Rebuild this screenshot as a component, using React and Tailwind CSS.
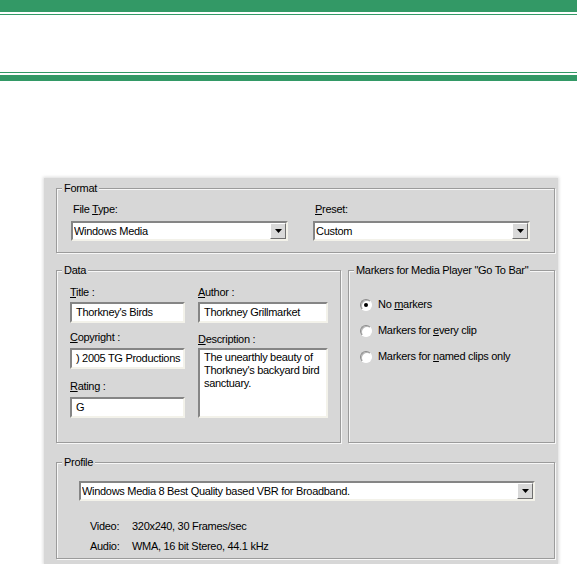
import React from 'react';

const GREEN = 'bg-[#339966]';

const Key = ({ children }) => <span className="underline underline-offset-[1px]">{children}</span>;

const Arrow = () => (
  <div className="flex h-[16px] w-[16px] items-center justify-center border border-t-white border-l-white border-b-[#6f6f6f] border-r-[#6f6f6f] bg-[#d9d9d9]">
    <svg width="7" height="4" viewBox="0 0 7 4">
      <path d="M0 0h7L3.5 4z" fill="#000" />
    </svg>
  </div>
);

const Combo = ({ value, className = '' }) => (
  <div
    className={`flex h-[20px] items-center border-2 border-t-[#858585] border-l-[#858585] border-b-[#f3f2ea] border-r-[#f3f2ea] bg-white pl-[1px] ${className}`}
  >
    <span className="flex-1 truncate">{value}</span>
    <Arrow />
  </div>
);

const Field = ({ value, className = '' }) => (
  <div
    className={`h-[21px] border-2 border-t-[#858585] border-l-[#858585] border-b-[#f3f2ea] border-r-[#f3f2ea] bg-white pl-[4px] leading-[17px] whitespace-nowrap overflow-hidden ${className}`}
  >
    {value}
  </div>
);

const Group = ({ title, className = '', children }) => (
  <fieldset className={`border border-[#9b9b9b] shadow-[1px_1px_0_#f7f7f7,inset_1px_1px_0_#f7f7f7] ${className}`}>
    <legend className="ml-[5px] bg-[#d7d7d7] px-[2px] leading-[13px]">{title}</legend>
    {children}
  </fieldset>
);

const Radio = ({ checked, children }) => (
  <div className="flex h-[13px] items-center">
    <div className="flex h-[12px] w-[12px] items-center justify-center rounded-full border border-t-[#8a8a8a] border-l-[#8a8a8a] border-b-white border-r-white bg-white shadow-[inset_1px_1px_0_#b5b5b5]">
      {checked && <div className="h-[4px] w-[4px] rounded-full bg-black" />}
    </div>
    <span className="ml-[6px] leading-[13px]">{children}</span>
  </div>
);

export default function App() {
  return (
    <div className="h-[564px] w-[577px] overflow-hidden bg-white font-['Liberation_Sans',Arial,sans-serif] text-[11px] tracking-[-0.3px] text-black">
      {/* header rules */}
      <div className={`h-[12px] ${GREEN}`} />
      <div className="h-[2px]" />
      <div className={`h-[1px] ${GREEN}`} />
      <div className="h-[57px]" />
      <div className={`h-[1px] ${GREEN}`} />
      <div className="h-[2px]" />
      <div className={`h-[6px] ${GREEN}`} />

      {/* dialog */}
      <div className="ml-[44px] mt-[97px] h-[386px] w-[514px] bg-[#d7d7d7] pl-[12px] pr-[3px] pt-[4px] shadow-[0_0_3px_1px_#dcdcdc]">
        <Group title="Format">
          <div className="grid grid-cols-[217px_217px] gap-x-[25px] pl-[14px] pt-[8px] pb-[11px]">
            <div>
              <div className="pl-[2px] leading-[13px]">
                File <Key>T</Key>ype:
              </div>
              <Combo value="Windows Media" className="mt-[5px]" />
            </div>
            <div>
              <div className="pl-[2px] leading-[13px]">
                <Key>P</Key>reset:
              </div>
              <Combo value="Custom" className="mt-[5px]" />
            </div>
          </div>
        </Group>

        <div className="mt-[11px] flex gap-[7px]">
          <Group title="Data" className="h-[179px] w-[285px]">
            <div className="flex gap-[13px] pl-[13px] pt-[9px]">
              <div className="w-[115px]">
                <div className="leading-[13px]">
                  <Key>T</Key>itle :
                </div>
                <Field value="Thorkney's Birds" className="mt-[3px]" />
                <div className="mt-[8px] leading-[13px]">
                  <Key>C</Key>opyright :
                </div>
                <Field value=") 2005 TG Productions" className="mt-[4px] pl-[1px]" />
                <div className="mt-[11px] leading-[13px]">
                  <Key>R</Key>ating :
                </div>
                <Field value="G" className="mt-[4px]" />
              </div>
              <div className="w-[130px]">
                <div className="leading-[13px]">
                  <Key>A</Key>uthor :
                </div>
                <Field value="Thorkney Grillmarket" className="mt-[3px]" />
                <div className="mt-[10px] leading-[13px]">
                  <Key>D</Key>escription :
                </div>
                <div className="mt-[2px] h-[70px] border-2 border-t-[#858585] border-l-[#858585] border-b-[#f3f2ea] border-r-[#f3f2ea] bg-white px-[4px] pt-[1px] leading-[13px]">
                  The unearthly beauty of Thorkney's backyard bird sanctuary.
                </div>
              </div>
            </div>
          </Group>

          <Group title={'Markers for Media Player "Go To Bar"'} className="h-[179px] w-[207px]">
            <div className="flex flex-col gap-[13px] pl-[11px] pt-[21px]">
              <Radio checked>
                No <Key>m</Key>arkers
              </Radio>
              <Radio>
                Markers for <Key>e</Key>very clip
              </Radio>
              <Radio>
                Markers for <Key>n</Key>amed clips only
              </Radio>
            </div>
          </Group>
        </div>

        <Group title="Profile" className="mt-[13px] h-[103px]">
          <div className="pl-[22px] pt-[12px]">
            <Combo value="Windows Media 8 Best Quality based VBR for Broadband." className="w-[456px]" />
            <div className="mt-[19px] flex flex-col gap-[7px] pl-[11px]">
              <div className="flex leading-[13px]">
                <span className="w-[42px]">Video:</span>
                <span>320x240, 30 Frames/sec</span>
              </div>
              <div className="flex leading-[13px]">
                <span className="w-[42px]">Audio:</span>
                <span>WMA, 16 bit Stereo, 44.1 kHz</span>
              </div>
            </div>
          </div>
        </Group>
      </div>
    </div>
  );
}
